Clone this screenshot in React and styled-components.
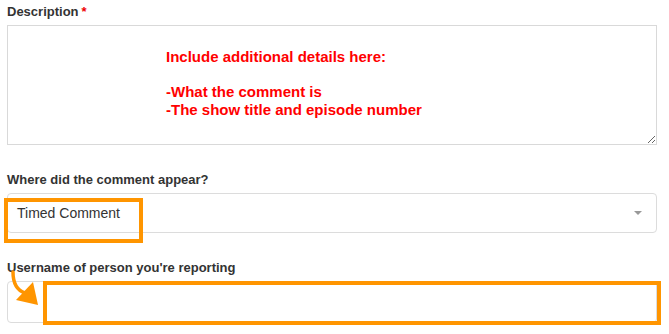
import React from 'react'
import styled, { createGlobalStyle } from 'styled-components'

const orange = '#ff9500'

const App = () => {
  return (
    <>
      <GlobalStyle />
      <Form>
        <Field>
          <Label>
            Description<Required>*</Required>
          </Label>
          <TextArea
            readOnly
            defaultValue={'Include additional details here:\n\n-What the comment is\n-The show title and episode number'}
          />
        </Field>

        <Field>
          <Label>Where did the comment appear?</Label>
          <SelectBox>
            <SelectValue>Timed Comment</SelectValue>
            <Caret />
            <Highlight $left={-4} $top={4} $width={139} $height={45} />
          </SelectBox>
        </Field>

        <Field>
          <Label>Username of person you're reporting</Label>
          <InputBox>
            <Highlight $left={35} $top={-1} $width={618} $height={44} />
          </InputBox>
          <Arrow width="34" height="40" viewBox="0 0 34 40">
            <path d="M6 3 C 6 14, 9 21, 18 24" fill="none" stroke={orange} strokeWidth="3.5" strokeLinecap="round" />
            <polygon points="9,31 26,13 31,36" fill={orange} />
          </Arrow>
        </Field>
      </Form>
    </>
  )
}

export default App

const GlobalStyle = createGlobalStyle`
    body {
        margin: 0;
        background: #fff;
        font-family: 'Liberation Sans', Arial, sans-serif;
    }
`
const Form = styled.div`
    width: 669px;
    height: 334px;
    padding: 3px 12px 0 7px;
    box-sizing: border-box;
    overflow: hidden;
`
const Field = styled.div`
    position: relative;
    margin-bottom: 26px;
`
const Label = styled.div`
    font-size: 13px;
    line-height: 18px;
    font-weight: 700;
    color: #333;
    margin-bottom: 4px;
`
const Required = styled.span`
    color: #e00;
    margin-left: 3px;
`
const TextArea = styled.textarea`
    display: block;
    width: 650px;
    height: 120px;
    box-sizing: border-box;
    border: 1px solid #d9d9d9;
    border-radius: 0;
    padding: 22px 10px 0 158px;
    margin: 0;
    font-family: 'Liberation Sans', Arial, sans-serif;
    font-size: 15px;
    font-weight: 700;
    line-height: 17.5px;
    color: #f00;
    background: #fff;
    outline: none;
    resize: vertical;
    overflow: hidden;
`
const SelectBox = styled.div`
    position: relative;
    width: 650px;
    height: 40px;
    box-sizing: border-box;
    border: 1px solid #dcdcdc;
    border-radius: 4px;
    display: flex;
    align-items: center;
    justify-content: space-between;
    padding: 0 14px 0 9px;
`
const SelectValue = styled.span`
    font-size: 14px;
    color: #333;
`
const Caret = styled.span`
    width: 0;
    height: 0;
    border-left: 4px solid transparent;
    border-right: 4px solid transparent;
    border-top: 4px solid #999;
    margin-top: -1px;
`
const InputBox = styled.div`
    position: relative;
    width: 650px;
    height: 42px;
    box-sizing: border-box;
    border: 1px solid #dcdcdc;
    border-radius: 4px;
`
const Highlight = styled.div`
    position: absolute;
    left: ${p => p.$left}px;
    top: ${p => p.$top}px;
    width: ${p => p.$width}px;
    height: ${p => p.$height}px;
    box-sizing: border-box;
    border: 4px solid ${orange};
`
const Arrow = styled.svg`
    position: absolute;
    left: 0;
    top: 10px;
`
